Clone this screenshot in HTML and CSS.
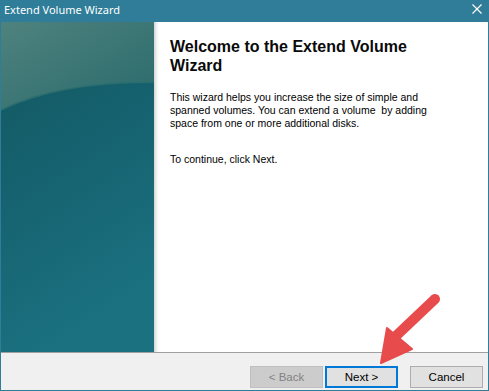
FILE: index.html
```html
<!DOCTYPE html>
<html>
<head>
<meta charset="utf-8">
<link rel="stylesheet" href="styles.css">
</head>
<body>
<div class="window">
  <div class="titlebar">
    <span class="title">Extend Volume Wizard</span>
    <svg class="close" width="10" height="10" viewBox="0 0 10 10"><path d="M0.5 0.5L9.5 9.5M9.5 0.5L0.5 9.5" stroke="#fff" stroke-width="1.2"/></svg>
  </div>
  <div class="main">
    <div class="art">
      <svg width="153" height="330" viewBox="0 0 153 330" preserveAspectRatio="none">
        <defs>
          <linearGradient id="top" x1="0" y1="0" x2="1" y2="1">
            <stop offset="0" stop-color="#4e827e"/>
            <stop offset="1" stop-color="#2a6a6c"/>
          </linearGradient>
          <linearGradient id="low" x1="0" y1="0" x2="0.3" y2="1">
            <stop offset="0" stop-color="#12585f"/>
            <stop offset="0.5" stop-color="#166270"/>
            <stop offset="1" stop-color="#1b7180"/>
          </linearGradient>
        </defs>
        <rect width="153" height="330" fill="url(#low)"/>
        <path d="M0 0H153V60C100 60 45 66 0 88Z" fill="url(#top)"/>
        <path d="M0 88C45 66 100 60 153 60" fill="none" stroke="#2d6e70" stroke-width="1.5"/>
      </svg>
    </div>
    <div class="shade"></div>
    <div class="content">
      <h1 class="heading">Welcome to the Extend Volume Wizard</h1>
      <p class="text">This wizard helps you increase the size of simple and<br>spanned volumes. You can extend a volume&nbsp; by adding<br>space from one or more additional disks.</p>
      <p class="text next-hint">To continue, click Next.</p>
    </div>
  </div>
  <div class="footer">
    <button class="btn disabled">&lt; Back</button>
    <button class="btn primary">Next &gt;</button>
    <button class="btn cancel">Cancel</button>
  </div>
  <svg class="arrow" width="80" height="80" viewBox="0 0 80 80">
    <path d="M62 8L24 44" stroke="#e84b4b" stroke-width="10" stroke-linecap="round" fill="none"/>
    <path d="M8 72L14 37L39 58Z" fill="#e84b4b" stroke="#e84b4b" stroke-width="2" stroke-linejoin="round"/>
  </svg>
</div>
</body>
</html>
```
FILE: styles.css
```css
html, body {
  margin: 0;
  padding: 0;
  background: #fff;
}
.window {
  position: relative;
  width: 489px;
  height: 391px;
  box-sizing: border-box;
  border: 1px solid #2f7d98;
  border-top: none;
  display: flex;
  flex-direction: column;
  overflow: hidden;
}
.titlebar {
  height: 22px;
  margin: 0 -1px;
  background: #2f7d98;
  display: flex;
  align-items: center;
  justify-content: space-between;
  padding: 0 7px 0 4px;
  flex-shrink: 0;
}
.title {
  color: #fff;
  font-family: "Noto Sans", sans-serif;
  font-size: 11px;
  line-height: 16px;
  margin-top: -3px;
}
.close {
  display: block;
  margin-top: -5px;
}
.main {
  display: flex;
  height: 330px;
  background: #fff;
}
.art {
  width: 153px;
  flex-shrink: 0;
}
.art svg {
  display: block;
}
.shade {
  width: 5px;
  flex-shrink: 0;
  background: linear-gradient(to right, #d4d4d4, #f4f4f4 60%, #fff);
}
.content {
  padding: 15px 0 0 11px;
  font-family: "Liberation Sans", Arial, sans-serif;
  color: #000;
}
.heading {
  margin: 0;
  font-family: "Liberation Sans", Arial, sans-serif;
  font-weight: bold;
  font-size: 16px;
  line-height: 19px;
  width: 270px;
  color: #0a0a0a;
}
.text {
  margin: 16px 0 0;
  font-size: 10.5px;
  line-height: 13px;
  width: 290px;
  color: #000;
}
.next-hint {
  margin-top: 23px;
}
.footer {
  border-top: 1px solid #a0a0a0;
  background: #f0f0f0;
  flex: 1;
  display: flex;
  justify-content: flex-end;
  align-items: flex-start;
  padding: 13px 5px 0 0;
}
.btn {
  width: 73px;
  height: 22px;
  box-sizing: border-box;
  border: 1px solid #adadad;
  background: #e1e1e1;
  font-family: "Liberation Sans", Arial, sans-serif;
  font-size: 11.5px;
  color: #000;
  padding: 0;
  margin: 0;
}
.disabled {
  background: #cccccc;
  border-color: #bfbfbf;
  color: #838383;
}
.primary {
  border: 2px solid #0078d7;
  margin-left: 2px;
}
.cancel {
  margin-left: 12px;
}
.arrow {
  position: absolute;
  left: 372px;
  top: 291px;
}
```
